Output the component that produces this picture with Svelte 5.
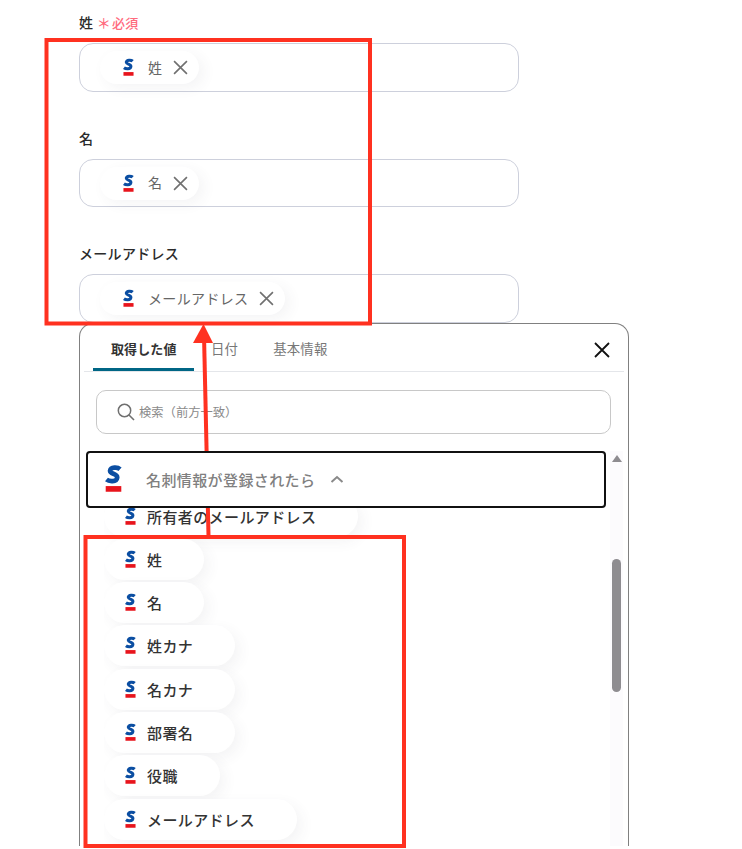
<script>
  const fields = [
    { label: '姓', value: '姓', required: true },
    { label: '名', value: '名' },
    { label: 'メールアドレス', value: 'メールアドレス' }
  ];
  const tabs = ['取得した値', '日付', '基本情報'];
  const outputs = ['姓', '名', '姓カナ', '名カナ', '部署名', '役職', 'メールアドレス'];
</script>

{#snippet logo(cls)}
  <svg class={cls} viewBox="0 0 12 19" aria-hidden="true">
    <path d="M10.6 2.6C9 1.1 4 0.9 3.6 3.6C3.2 6.2 9 5.4 8.6 8.6C8.2 11.8 2.8 11.3 1 9.8" fill="none" stroke="#0b4ea2" stroke-width="3.3" />
    <rect x="0.5" y="14.5" width="11" height="4" fill="#e8141c" />
  </svg>
{/snippet}

<div class="page">
  <div class="form">
    {#each fields as f}
      <div class="field">
        <div class="label">
          {f.label}
          {#if f.required}<span class="req"><span class="star">＊</span>必須</span>{/if}
        </div>
        <div class="input">
          <span class="tag">
            {@render logo('logo-sm')}
            <span class="tag-text">{f.value}</span>
            <svg class="tag-x" viewBox="0 0 14 14" aria-hidden="true">
              <path d="M1 1L13 13M13 1L1 13" stroke="#707070" stroke-width="1.5" fill="none" />
            </svg>
          </span>
        </div>
      </div>
    {/each}
  </div>

  <div class="panel">
    <div class="tabs">
      {#each tabs as t, i}
        <div class="tab" class:active={i === 0}>{t}</div>
      {/each}
      <svg class="close" viewBox="0 0 16 16" aria-hidden="true">
        <path d="M1 1L15 15M15 1L1 15" stroke="#111" stroke-width="1.8" fill="none" />
      </svg>
    </div>

    <div class="search">
      <svg class="glass" viewBox="0 0 18 18" aria-hidden="true">
        <circle cx="7.5" cy="7.5" r="6.2" fill="none" stroke="#707070" stroke-width="1.5" />
        <path d="M12 12L17 17" stroke="#707070" stroke-width="1.6" />
      </svg>
      <span>検索（前方一致）</span>
    </div>

    <div class="body">
      <div class="content">
        <div class="group">
          {@render logo('logo-lg')}
          <span class="group-name">名刺情報が登録されたら</span>
          <svg class="chev" viewBox="0 0 14 8" aria-hidden="true">
            <path d="M1.5 7L7 2L12.5 7" stroke="#8a8a8a" stroke-width="2" fill="none" />
          </svg>
        </div>
        <div class="list">
          <div class="item clipped">
            {@render logo('logo-sm')}
            <span>所有者のメールアドレス</span>
          </div>
          {#each outputs as o}
            <div class="item">
              {@render logo('logo-sm')}
              <span>{o}</span>
            </div>
          {/each}
        </div>
      </div>
      <div class="scroll">
        <div class="arrow"></div>
        <div class="thumb"></div>
      </div>
    </div>
  </div>

  <!-- annotation marks on top of the screenshot -->
  <svg class="marks" viewBox="0 0 742 849" aria-hidden="true">
    <rect x="46.5" y="40" width="323.5" height="283.5" fill="none" stroke="#ff3120" stroke-width="4" />
    <rect x="85.5" y="537" width="318.5" height="309" fill="none" stroke="#ff3120" stroke-width="4" />
    <path d="M208.5 536L204 335" stroke="#ff3120" stroke-width="4" fill="none" />
    <path d="M203.5 324L213 343H193Z" fill="#ff3120" />
  </svg>
</div>

<style>
  :global(body) {
    background: #fff;
  }
  .page {
    position: relative;
    width: 742px;
    height: 849px;
    overflow: hidden;
    padding-left: 79px;
    box-sizing: border-box;
    font-family: "Noto Sans CJK JP", "Noto Sans", sans-serif;
    color: #333;
  }

  /* form fields */
  .form {
    width: 440px;
    display: flex;
    flex-direction: column;
    gap: 37px;
    padding-top: 13px;
  }
  .field {
    display: flex;
    flex-direction: column;
    gap: 9px;
  }
  .label {
    height: 21px;
    line-height: 19px;
    font-size: 14px;
    font-weight: 500;
    letter-spacing: 0.3px;
    color: #2b2b2b;
  }
  .req {
    font-size: 13px;
    color: #ff6b7d;
  }
  .star {
    font-size: 14px;
    margin-right: 1px;
  }
  .input {
    height: 48.5px;
    box-sizing: border-box;
    border: 1px solid #cdd0dc;
    border-radius: 14px;
    padding: 7px 20px;
  }
  .tag {
    display: inline-flex;
    align-items: center;
    height: 33px;
    padding: 0 11px 0 23px;
    border-radius: 17px;
    background: #fff;
    box-shadow: 5px 4px 14px rgba(60, 60, 90, 0.06);
    font-size: 14px;
    line-height: 18px;
    letter-spacing: 0.35px;
    color: #666;
  }
  .tag-text {
    margin: -2px 0 0 14px;
  }
  .tag-x {
    width: 15px;
    height: 15px;
    margin-left: 11px;
  }

  /* picker panel */
  .panel {
    width: 550px;
    height: 523px;
    box-sizing: border-box;
    border: 1px solid #808080;
    border-bottom: none;
    border-radius: 14px 14px 0 0;
    background: #fff;
    overflow: hidden;
    display: flex;
    flex-direction: column;
  }
  .tabs {
    position: relative;
    margin: 0 4px;
    height: 47px;
    flex: none;
    display: flex;
    padding-left: 9px;
    border-bottom: 1px solid #e4e6ea;
  }
  .tab {
    font-size: 13.4px;
    line-height: 49px;
    color: #777;
    padding: 0 18px 0 17px;
    letter-spacing: 0.2px;
    white-space: nowrap;
  }
  .tab.active {
    width: 101px;
    box-sizing: border-box;
    height: 47px;
    padding: 0 0 0 18px;
    font-size: 13px;
    letter-spacing: 0.1px;
    font-weight: 700;
    color: #333;
    border-bottom: 3px solid #006685;
    border-radius: 3px 3px 0 0;
  }
  .close {
    position: absolute;
    right: 14px;
    top: 18px;
    width: 16px;
    height: 16px;
  }
  .search {
    flex: none;
    margin: 18px 0 0 16px;
    width: 515px;
    height: 44px;
    box-sizing: border-box;
    border: 1px solid #c8c8c8;
    border-radius: 10px;
    display: flex;
    align-items: center;
    padding-left: 20px;
    gap: 4px;
    font-size: 12.3px;
    color: #8a8a8a;
  }
  .glass {
    width: 18px;
    height: 18px;
  }
  .body {
    flex: 1;
    min-height: 0;
    display: flex;
    margin-top: 17px;
  }
  .content {
    flex: none;
    width: 531px;
    padding-left: 6px;
    box-sizing: border-box;
    display: flex;
    flex-direction: column;
    min-height: 0;
  }
  .group {
    position: relative;
    z-index: 1;
    flex: none;
    width: 520px;
    height: 57px;
    box-sizing: border-box;
    border: 2px solid #111;
    border-radius: 4px;
    background: #fff;
    display: flex;
    align-items: center;
    padding-left: 17px;
    font-size: 15px;
    font-weight: 500;
    letter-spacing: 0.4px;
    color: #808080;
  }
  .group-name {
    margin-left: 24px;
  }
  .chev {
    width: 14px;
    height: 8px;
    margin-left: 15px;
  }
  .list {
    margin-left: 18px;
    flex: 1;
    min-height: 0;
    overflow: hidden;
    display: flex;
    flex-direction: column;
    align-items: flex-start;
    gap: 2.3px;
    padding: 1px 30px 0 0;
  }
  .item {
    flex: none;
    display: inline-flex;
    align-items: center;
    height: 41px;
    padding: 0 42px 0 21px;
    box-sizing: border-box;
    border-radius: 21px;
    background: #fff;
    box-shadow: 5px 5px 14px rgba(60, 60, 90, 0.06);
    font-size: 15px;
    font-weight: 500;
    letter-spacing: 0.4px;
    color: #333;
  }
  .item span {
    margin-left: 11px;
  }
  .clipped {
    margin-top: -13px;
  }
  .scroll {
    position: relative;
    flex: none;
    width: 13px;
    margin-left: -1px;
    background: #fcfbfd;
  }
  .arrow {
    margin: 4px auto 0;
    width: 0;
    height: 0;
    border-left: 5px solid transparent;
    border-right: 5px solid transparent;
    border-bottom: 7px solid #8e8c90;
  }
  .thumb {
    width: 9px;
    height: 133px;
    margin: 97px 0 0 2px;
    border-radius: 5px;
    background: #8e8c90;
  }
  .logo-sm {
    flex: none;
    width: 11px;
    height: 19px;
  }
  .logo-lg {
    flex: none;
    width: 17px;
    height: 28px;
  }

  .marks {
    position: absolute;
    left: 0;
    top: 0;
    width: 742px;
    height: 849px;
    pointer-events: none;
  }
</style>
